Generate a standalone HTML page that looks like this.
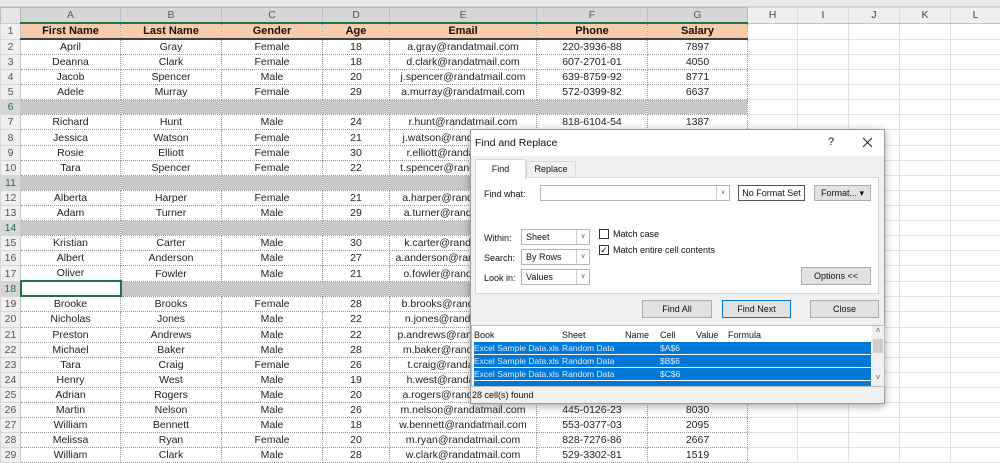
<!DOCTYPE html>
<html><head><meta charset="utf-8"><style>
*{box-sizing:border-box;margin:0;padding:0}
body{width:1000px;height:461px;overflow:hidden;background:#fff;font-family:"Liberation Sans",Arial,sans-serif;position:relative}
.strip{position:absolute;left:0;top:0;width:1000px;height:7px;background:#e8e8e8;border-bottom:1px solid #d4d4d4}
table{position:absolute;left:0;top:7px;border-collapse:collapse;table-layout:fixed;width:1000px;font-size:10.5px;color:#222}
td{height:15.1px;padding:0;text-align:center;white-space:nowrap;overflow:hidden;border-right:1px dotted #9a9a9a;border-bottom:1px dotted #9a9a9a;line-height:14px}
td.rh{background:#efefef;color:#555;border:1px solid #d8d8d8;border-right:1px solid #c6c6c6;font-size:10.5px}
tr.ch td{height:15px;background:#d6d6d6;color:#3f6e44;border:1px solid #bdbdbd;border-bottom:2px solid #217346;font-size:10.5px}
tr.ch td.x{background:#efefef;color:#444;border-color:#dadada;border-bottom:1px solid #c6c6c6}
tr.ch td.rh{background:#e6e6e6;border-bottom:1px solid #c6c6c6}
td.e{border:1px solid #e1e1e1;border-top:none;border-left:none}
tr.h1 td.d{background:#f8cbad;font-weight:bold;font-size:11px;color:#111;border-bottom:2px solid #404040}
tr.g td.d{background:#c8c8c8}
tr.g td.rh{background:#d6d6d6;color:#217346}
td.sel{background:#fff!important;border:2px solid #217346!important}
.dlg{position:absolute;left:470px;top:129px;width:415px;height:275px;background:#f0f0f0;border:1px solid #9a9a9a;box-shadow:0 2px 8px rgba(0,0,0,.35);font-size:9px;color:#111}
.dlg div,.dlg svg{position:absolute}
.btn{background:#e1e1e1;border:1px solid #adadad;text-align:center;line-height:16px}
.inp{background:#fff;border:1px solid #b5b5b5;padding-left:4px;line-height:14px}
.dd{right:0;top:0;width:13px;height:100%;border-left:1px solid #ccc;background:#fff;text-align:center;color:#777;font-size:7px;line-height:14px}
.cb{width:10px;height:10px;border:1px solid #333;background:#fff}
.row{left:3px;width:397px;height:12px;background:#0078d7;color:#dfefff;line-height:12px;font-size:8.5px}
.row span{position:absolute}
</style></head><body>
<div class="strip"></div>
<table>
<colgroup><col style="width:20px"><col style="width:100px"><col style="width:101px"><col style="width:101px"><col style="width:67px"><col style="width:147px"><col style="width:111px"><col style="width:100px"><col style="width:50px"><col style="width:51px"><col style="width:51px"><col style="width:51px"><col style="width:50px"></colgroup>
<tr class="ch"><td class="rh"></td><td>A</td><td>B</td><td>C</td><td>D</td><td>E</td><td>F</td><td>G</td><td class="x">H</td><td class="x">I</td><td class="x">J</td><td class="x">K</td><td class="x">L</td></tr>
<tr class="h1"><td class="rh">1</td><td class="d">First Name</td><td class="d">Last Name</td><td class="d">Gender</td><td class="d">Age</td><td class="d">Email</td><td class="d">Phone</td><td class="d">Salary</td><td class="e"></td><td class="e"></td><td class="e"></td><td class="e"></td><td class="e"></td></tr>
<tr><td class="rh">2</td><td>April</td><td>Gray</td><td>Female</td><td>18</td><td>a.gray@randatmail.com</td><td>220-3936-88</td><td>7897</td><td class="e"></td><td class="e"></td><td class="e"></td><td class="e"></td><td class="e"></td></tr>
<tr><td class="rh">3</td><td>Deanna</td><td>Clark</td><td>Female</td><td>18</td><td>d.clark@randatmail.com</td><td>607-2701-01</td><td>4050</td><td class="e"></td><td class="e"></td><td class="e"></td><td class="e"></td><td class="e"></td></tr>
<tr><td class="rh">4</td><td>Jacob</td><td>Spencer</td><td>Male</td><td>20</td><td>j.spencer@randatmail.com</td><td>639-8759-92</td><td>8771</td><td class="e"></td><td class="e"></td><td class="e"></td><td class="e"></td><td class="e"></td></tr>
<tr><td class="rh">5</td><td>Adele</td><td>Murray</td><td>Female</td><td>29</td><td>a.murray@randatmail.com</td><td>572-0399-82</td><td>6637</td><td class="e"></td><td class="e"></td><td class="e"></td><td class="e"></td><td class="e"></td></tr>
<tr class="g"><td class="rh">6</td><td class="d"></td><td class="d"></td><td class="d"></td><td class="d"></td><td class="d"></td><td class="d"></td><td class="d"></td><td class="e"></td><td class="e"></td><td class="e"></td><td class="e"></td><td class="e"></td></tr>
<tr><td class="rh">7</td><td>Richard</td><td>Hunt</td><td>Male</td><td>24</td><td>r.hunt@randatmail.com</td><td>818-6104-54</td><td>1387</td><td class="e"></td><td class="e"></td><td class="e"></td><td class="e"></td><td class="e"></td></tr>
<tr><td class="rh">8</td><td>Jessica</td><td>Watson</td><td>Female</td><td>21</td><td>j.watson@randatmail.com</td><td></td><td></td><td class="e"></td><td class="e"></td><td class="e"></td><td class="e"></td><td class="e"></td></tr>
<tr><td class="rh">9</td><td>Rosie</td><td>Elliott</td><td>Female</td><td>30</td><td>r.elliott@randatmail.com</td><td></td><td></td><td class="e"></td><td class="e"></td><td class="e"></td><td class="e"></td><td class="e"></td></tr>
<tr><td class="rh">10</td><td>Tara</td><td>Spencer</td><td>Female</td><td>22</td><td>t.spencer@randatmail.com</td><td></td><td></td><td class="e"></td><td class="e"></td><td class="e"></td><td class="e"></td><td class="e"></td></tr>
<tr class="g"><td class="rh">11</td><td class="d"></td><td class="d"></td><td class="d"></td><td class="d"></td><td class="d"></td><td class="d"></td><td class="d"></td><td class="e"></td><td class="e"></td><td class="e"></td><td class="e"></td><td class="e"></td></tr>
<tr><td class="rh">12</td><td>Alberta</td><td>Harper</td><td>Female</td><td>21</td><td>a.harper@randatmail.com</td><td></td><td></td><td class="e"></td><td class="e"></td><td class="e"></td><td class="e"></td><td class="e"></td></tr>
<tr><td class="rh">13</td><td>Adam</td><td>Turner</td><td>Male</td><td>29</td><td>a.turner@randatmail.com</td><td></td><td></td><td class="e"></td><td class="e"></td><td class="e"></td><td class="e"></td><td class="e"></td></tr>
<tr class="g"><td class="rh">14</td><td class="d"></td><td class="d"></td><td class="d"></td><td class="d"></td><td class="d"></td><td class="d"></td><td class="d"></td><td class="e"></td><td class="e"></td><td class="e"></td><td class="e"></td><td class="e"></td></tr>
<tr><td class="rh">15</td><td>Kristian</td><td>Carter</td><td>Male</td><td>30</td><td>k.carter@randatmail.com</td><td></td><td></td><td class="e"></td><td class="e"></td><td class="e"></td><td class="e"></td><td class="e"></td></tr>
<tr><td class="rh">16</td><td>Albert</td><td>Anderson</td><td>Male</td><td>27</td><td>a.anderson@randatmail.com</td><td></td><td></td><td class="e"></td><td class="e"></td><td class="e"></td><td class="e"></td><td class="e"></td></tr>
<tr><td class="rh">17</td><td>Oliver</td><td>Fowler</td><td>Male</td><td>21</td><td>o.fowler@randatmail.com</td><td></td><td></td><td class="e"></td><td class="e"></td><td class="e"></td><td class="e"></td><td class="e"></td></tr>
<tr class="g"><td class="rh">18</td><td class="d sel"></td><td class="d"></td><td class="d"></td><td class="d"></td><td class="d"></td><td class="d"></td><td class="d"></td><td class="e"></td><td class="e"></td><td class="e"></td><td class="e"></td><td class="e"></td></tr>
<tr><td class="rh">19</td><td>Brooke</td><td>Brooks</td><td>Female</td><td>28</td><td>b.brooks@randatmail.com</td><td></td><td></td><td class="e"></td><td class="e"></td><td class="e"></td><td class="e"></td><td class="e"></td></tr>
<tr><td class="rh">20</td><td>Nicholas</td><td>Jones</td><td>Male</td><td>22</td><td>n.jones@randatmail.com</td><td></td><td></td><td class="e"></td><td class="e"></td><td class="e"></td><td class="e"></td><td class="e"></td></tr>
<tr><td class="rh">21</td><td>Preston</td><td>Andrews</td><td>Male</td><td>22</td><td>p.andrews@randatmail.com</td><td></td><td></td><td class="e"></td><td class="e"></td><td class="e"></td><td class="e"></td><td class="e"></td></tr>
<tr><td class="rh">22</td><td>Michael</td><td>Baker</td><td>Male</td><td>28</td><td>m.baker@randatmail.com</td><td></td><td></td><td class="e"></td><td class="e"></td><td class="e"></td><td class="e"></td><td class="e"></td></tr>
<tr><td class="rh">23</td><td>Tara</td><td>Craig</td><td>Female</td><td>26</td><td>t.craig@randatmail.com</td><td></td><td></td><td class="e"></td><td class="e"></td><td class="e"></td><td class="e"></td><td class="e"></td></tr>
<tr><td class="rh">24</td><td>Henry</td><td>West</td><td>Male</td><td>19</td><td>h.west@randatmail.com</td><td></td><td></td><td class="e"></td><td class="e"></td><td class="e"></td><td class="e"></td><td class="e"></td></tr>
<tr><td class="rh">25</td><td>Adrian</td><td>Rogers</td><td>Male</td><td>20</td><td>a.rogers@randatmail.com</td><td></td><td></td><td class="e"></td><td class="e"></td><td class="e"></td><td class="e"></td><td class="e"></td></tr>
<tr><td class="rh">26</td><td>Martin</td><td>Nelson</td><td>Male</td><td>26</td><td>m.nelson@randatmail.com</td><td>445-0126-23</td><td>8030</td><td class="e"></td><td class="e"></td><td class="e"></td><td class="e"></td><td class="e"></td></tr>
<tr><td class="rh">27</td><td>William</td><td>Bennett</td><td>Male</td><td>18</td><td>w.bennett@randatmail.com</td><td>553-0377-03</td><td>2095</td><td class="e"></td><td class="e"></td><td class="e"></td><td class="e"></td><td class="e"></td></tr>
<tr><td class="rh">28</td><td>Melissa</td><td>Ryan</td><td>Female</td><td>20</td><td>m.ryan@randatmail.com</td><td>828-7276-86</td><td>2667</td><td class="e"></td><td class="e"></td><td class="e"></td><td class="e"></td><td class="e"></td></tr>
<tr><td class="rh">29</td><td>William</td><td>Clark</td><td>Male</td><td>28</td><td>w.clark@randatmail.com</td><td>529-3302-81</td><td>1519</td><td class="e"></td><td class="e"></td><td class="e"></td><td class="e"></td><td class="e"></td></tr>
</table>

<div class="dlg">
 <div style="left:0;top:0;width:413px;height:26px;background:#fff"></div>
 <div style="left:4px;top:7px;font-size:10.5px">Find and Replace</div>
 <div style="left:357px;top:6px;font-size:11px">?</div>
 <svg style="left:391px;top:7px" width="11" height="11" viewBox="0 0 11 11"><path d="M1 1L10 10M10 1L1 10" stroke="#333" stroke-width="1.2" fill="none"/></svg>
 <div style="left:4px;top:47px;width:404px;height:117px;background:#fff;border:1px solid #d9d9d9"></div>
 <div style="left:4px;top:29px;width:51px;height:20px;background:#fff;border:1px solid #d9d9d9;border-bottom:none;text-align:center;line-height:18px">Find</div>
 <div style="left:55px;top:31px;width:50px;height:17px;background:#f0f0f0;border:1px solid #d9d9d9;text-align:center;line-height:15px">Replace</div>
 <div style="left:13px;top:59px">Find what:</div>
 <div class="inp" style="left:69px;top:55px;width:190px;height:16px"><div class="dd">&#8744;</div></div>
 <div class="btn" style="left:267px;top:55px;width:67px;height:16px;background:#fff;border-color:#555;line-height:14px">No Format Set</div>
 <div class="btn" style="left:343px;top:55px;width:57px;height:16px;line-height:14px">Format... ▾</div>
 <div style="left:13px;top:103px">Within:</div>
 <div style="left:13px;top:123px">Search:</div>
 <div style="left:13px;top:143px">Look in:</div>
 <div class="inp" style="left:50px;top:99px;width:69px;height:16px">Sheet<div class="dd">&#8744;</div></div>
 <div class="inp" style="left:50px;top:119px;width:69px;height:16px">By Rows<div class="dd">&#8744;</div></div>
 <div class="inp" style="left:50px;top:139px;width:69px;height:16px">Values<div class="dd">&#8744;</div></div>
 <div class="cb" style="left:128px;top:99px"></div><div style="left:142px;top:99px">Match case</div>
 <div class="cb" style="left:128px;top:115px;font-size:9px;line-height:8px;text-align:center">✓</div><div style="left:142px;top:115px">Match entire cell contents</div>
 <div class="btn" style="left:330px;top:137px;width:70px;height:18px">Options &lt;&lt;</div>
 <div class="btn" style="left:171px;top:170px;width:70px;height:18px">Find All</div>
 <div class="btn" style="left:251px;top:170px;width:69px;height:18px;border:1px solid #0078d7">Find Next</div>
 <div class="btn" style="left:339px;top:170px;width:69px;height:18px">Close</div>
 <div style="left:0;top:195px;width:414px;height:62px;background:#fff;border:1px solid #bbb"></div>
 <div style="left:3px;top:200px">Book</div><div style="left:91px;top:200px">Sheet</div><div style="left:154px;top:200px">Name</div><div style="left:189px;top:200px">Cell</div><div style="left:225px;top:200px">Value</div><div style="left:257px;top:200px">Formula</div>
 <div class="row" style="top:212px"><span style="left:0">Excel Sample Data.xls</span><span style="left:88px">Random Data</span><span style="left:186px">$A$6</span></div>
 <div class="row" style="top:225px"><span style="left:0">Excel Sample Data.xls</span><span style="left:88px">Random Data</span><span style="left:186px">$B$6</span></div>
 <div class="row" style="top:238px"><span style="left:0">Excel Sample Data.xls</span><span style="left:88px">Random Data</span><span style="left:186px">$C$6</span></div>
 <div class="row" style="top:251px;height:5px"></div>
 <div style="left:401px;top:196px;width:12px;height:60px;background:#f0f0f0;color:#555;font-size:8px;text-align:center">˄</div>
 <div style="left:402px;top:209px;width:10px;height:14px;background:#cdcdcd"></div>
 <div style="left:401px;top:243px;font-size:8px;color:#555;width:12px;text-align:center">˅</div>
 <div style="left:1px;top:260px">28 cell(s) found</div>
</div>
</body></html>
